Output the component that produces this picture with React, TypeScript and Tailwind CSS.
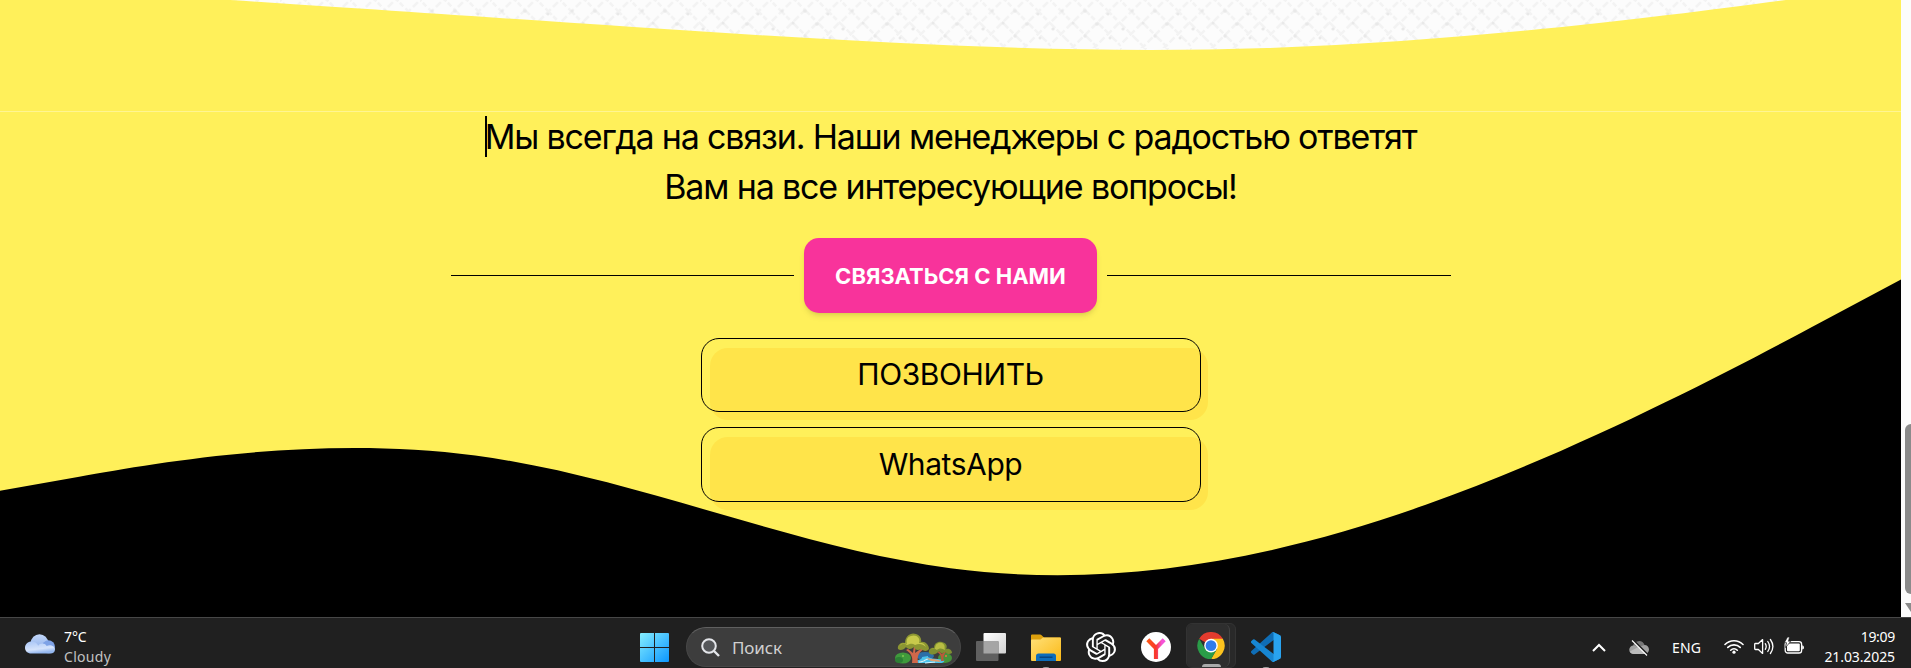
import React from "react";
import { SiOpenai } from "react-icons/si";

function TopWave() {
  return (
    <svg className="block h-[423px] w-full shrink-0" viewBox="0 0 1440 320" preserveAspectRatio="none">
      <path fill="#fff05a" transform="translate(0 0.4)" d="M0,224L80,229.33C160,234.67,320,245.33,480,256C640,266.67,800,277.33,960,272C1120,266.67,1280,245.33,1360,234.67L1440,224L1440,320L0,320Z" />
    </svg>
  );
}

function BottomWave() {
  return (
    <svg className="block h-[422.5px] w-full" viewBox="0 0 1440 320" preserveAspectRatio="none">
      <path fill="#000" d="M0,224L60,213.33C120,202.67,240,181.33,360,197.33C480,213.33,600,266.67,720,282.67C840,298.67,960,277.33,1080,234.67C1200,192,1320,128,1380,96L1440,64L1440,321L0,321Z" />
    </svg>
  );
}

function Texture() {
  return (
    <svg className="absolute inset-0 h-[60px] w-full">
      <defs>
        <pattern id="weave" width="70" height="48" patternUnits="userSpaceOnUse">
          <g fill="none" stroke="#f3f3f3" strokeWidth="2.600">
            <path d="M-5 -5L50 50M20 -5L75 50M-28 -5L27 50M42 -5L97 50" strokeDasharray="9 2 5 3" />
            <path d="M75 -5L20 50M50 -5L-5 50M28 -5L-27 50M97 -5L42 50" strokeDasharray="7 3" />
          </g>
          <g fill="#e9e9e9">
            <circle cx="12" cy="11" r="1.600" />
            <circle cx="35" cy="11" r="1.800" />
            <circle cx="58" cy="14" r="1.500" />
            <circle cx="23" cy="23" r="1.500" />
            <circle cx="47" cy="24" r="1.800" />
            <circle cx="3" cy="29" r="1.600" />
            <circle cx="35" cy="36" r="1.700" />
            <circle cx="60" cy="38" r="1.500" />
          </g>
        </pattern>
      </defs>
      <rect width="100%" height="60" fill="url(#weave)" />
    </svg>
  );
}

function ContactButton({ label, height }: { label: string; height: string }) {
  return (
    <div className={`relative flex w-[500px] ${height}`}>
      <div className="absolute -bottom-2 -right-[7px] left-[9px] top-[10px] rounded-[18px] bg-[#ffe44a]" />
      <button className="relative flex-1 rounded-[18px] border border-black pb-0.5 text-[30px] leading-none tracking-[-0.42px] text-black">
        {label}
      </button>
    </div>
  );
}

function Cloud() {
  return (
    <svg className="h-5 w-[30px]" viewBox="0 0 30 20">
      <defs>
        <linearGradient id="cloudBack" x1="0" y1="0" x2="0" y2="1"><stop stopColor="#c3d8fa" /><stop offset="1" stopColor="#86a9e8" /></linearGradient>
        <linearGradient id="cloudFront" x1="0" y1="0" x2="0.3" y2="1"><stop stopColor="#a9c6f7" /><stop offset=".7" stopColor="#d5e3fb" /><stop offset="1" stopColor="#94b7ef" /></linearGradient>
      </defs>
      <circle cx="14.500" cy="9" r="8.700" fill="url(#cloudBack)" />
      <circle cx="23.500" cy="12.800" r="6.500" fill="#7ea2e6" />
      <path d="M6.500 7.500c3.500 0 5.800 1.800 6.600 4.200 2-3 7-3 8.600.3 3-1.800 8.300-.2 8.300 3.400 0 2.700-2 4.100-4.500 4.100H6.200C2.700 19.500 0 17 0 13.700c0-3.500 3-6.200 6.500-6.200z" fill="url(#cloudFront)" />
    </svg>
  );
}

function WindowsLogo() {
  return (
    <svg className="h-[29px] w-[29px]" viewBox="0 0 29 29">
      <defs><linearGradient id="win" x1="0" y1="0" x2="1" y2="1"><stop stopColor="#85eeff" /><stop offset="1" stopColor="#0c96ff" /></linearGradient></defs>
      <path fill="url(#win)" d="M1 0h13v14H0V1a1 1 0 0 1 1-1zM15 0h13a1 1 0 0 1 1 1v13H15zM0 15h14v14H1a1 1 0 0 1-1-1zM15 15h14v13a1 1 0 0 1-1 1H15z" />
    </svg>
  );
}

function Trees() {
  return (
    <svg className="h-[31px] w-[57px]" viewBox="0 0 57 31">
      <ellipse cx="30" cy="23" rx="9" ry="4" fill="#2d6fa8" />
      <ellipse cx="8" cy="25" rx="8" ry="5.500" fill="#3f9a3c" />
      <ellipse cx="4" cy="27" rx="4" ry="3" fill="#2c7f34" />
      <ellipse cx="50" cy="25" rx="7" ry="5" fill="#46953a" />
      <path d="M20 30c-1-3 8-3 7-6l6-1c-1 3 8 2 16 4 1 2-1 3-3 3z" fill="#4cc3ec" />
      <path d="M24 29c5 0 5-2 9-3M30 30l10-1" stroke="#d4f5ff" strokeWidth="1.200" />
      <path d="M31 25l13 2 2 2-10-1z" fill="#e0a070" />
      <path d="M17 30c1-6-1-10-6-13l2-1 5 4 1-8h2l-1 8 7-5 2 1c-6 4-7 8-6 14z" fill="#d0684a" />
      <path d="M46 28c1-5-1-7-4-9l2-1 3 3 4-4 1 1c-4 4-4 7-3 10z" fill="#b85a3b" />
      <path d="M3 16c-1-4 3-7 7-6 0-7 6-11 11-9 4 1 6 5 5 8 4-1 8 3 8 7-2 3-6 2-8 0-3 2-6 1-7-2-3 3-7 2-8 0-2 3-6 4-8 2z" fill="#8c9632" />
      <path d="M5 13c1-3 4-3 7-1 4-1 4-2 8 0 4-2 8-1 11 2-2-5-5-4-7-4 2-5-3-9-8-7-4 1-5 4-4 8-4-1-6 0-7 2z" fill="#c7c94b" />
      <path d="M34 20c-1-3 2-6 5-5 0-5 4-7 8-6s6 4 4 7c4-1 6 2 6 4-3 2-5 1-7-1-2 2-5 1-6-1-2 3-7 5-10 2z" fill="#7f8f31" />
      <path d="M36 17c2-2 4-1 6 0 2-2 5-2 8 0-1-2 1-5-3-7-4-1-7 1-7 6-2-1-3 0-4 1z" fill="#b8bd43" />
      <circle cx="51" cy="23" r="1" fill="#ef7045" />
      <circle cx="8" cy="23" r="1" fill="#84c652" />
    </svg>
  );
}

function TaskView() {
  return (
    <svg className="h-7 w-[30px]" viewBox="0 0 30 28">
      <defs><linearGradient id="tv" x1="0" y1="0" x2="1" y2="1"><stop stopColor="#fff" /><stop offset="1" stopColor="#d2d2d2" /></linearGradient></defs>
      <rect x="7.500" width="22.500" height="20.500" rx="1" fill="url(#tv)" />
      <rect y="8" width="22.500" height="20" rx="1" fill="#606060" />
      <path d="M7.500 8h14a1 1 0 0 1 1 1v11.500h-15z" fill="#a5a5a5" />
    </svg>
  );
}

function Folder() {
  return (
    <svg className="h-[27px] w-[30px]" viewBox="0 0 30 27">
      <defs><linearGradient id="fold" x1="0" y1="0" x2="1" y2="1"><stop stopColor="#ffe078" /><stop offset="1" stopColor="#fbb916" /></linearGradient></defs>
      <path d="M0 8V1.500Q0 .5 1 .5h8q1 0 1.600.8L13 3.500h16q1 0 1 1V10H0z" fill="#dda00d" />
      <path d="M0 6.500Q0 5.500 1 5.500h8.500L12 3.500h17q1 0 1 1V26q0 1-1 1H1q-1 0-1-1z" fill="url(#fold)" />
      <path d="M5 27v-5q0-2.500 2.500-2.500h15q2.500 0 2.500 2.500v5z" fill="#0d6dbb" />
      <path d="M8.500 23.200h13" stroke="#063c75" strokeWidth="1.200" />
    </svg>
  );
}

function Yandex() {
  return (
    <svg className="h-[30px] w-[30px]" viewBox="0 0 30 30">
      <defs><linearGradient id="ya" x1="0" y1="0" x2="1" y2="0"><stop stopColor="#ff5a10" /><stop offset=".5" stopColor="#f8372e" /><stop offset=".8" stopColor="#f553d8" /></linearGradient></defs>
      <circle cx="15" cy="15" r="15" fill="#fff" />
      <path d="M5.300 9.200l3-3 6.700 6.900 6.700-6.900 3 3-7.600 7.900V27h-4.200v-9.900z" fill="url(#ya)" />
    </svg>
  );
}

function Chrome() {
  return (
    <svg className="h-[30px] w-[30px]" viewBox="0 0 48 48">
      <path d="M24 24L3.200 12A24 24 0 0 1 44.800 12z" fill="#e33b2e" />
      <path d="M24 12h20.800A24 24 0 0 1 24 48L34.400 30z" fill="#fcc31e" />
      <path d="M13.600 30L3.200 12A24 24 0 0 0 24 48l10.400-18z" fill="#2a9c48" />
      <circle cx="24" cy="24" r="12" fill="#fff" />
      <circle cx="24" cy="24" r="9.500" fill="#2f7bea" />
    </svg>
  );
}

function VsCode() {
  return (
    <svg className="h-[30px] w-[30px]" viewBox="0 0 100 100">
      <path d="M96.500 10.800L75.900.9a6.200 6.200 0 0 0-7.100 1.200L1.300 63.600a4.200 4.200 0 0 0 0 6.200l5.500 5a4.200 4.200 0 0 0 5.300.2L93.400 13.400a4.100 4.100 0 0 1 6.600 3.300v-.3a6.300 6.300 0 0 0-3.500-5.600z" fill="#0f6db5" />
      <path d="M96.500 89.200l-20.600 9.900a6.200 6.200 0 0 1-7.100-1.200L1.300 36.400a4.200 4.200 0 0 1 0-6.200l5.500-5a4.200 4.200 0 0 1 5.300-.2l81.300 61.600a4.100 4.100 0 0 0 6.600-3.300v.3a6.300 6.300 0 0 1-3.500 5.600z" fill="#1786d2" />
      <path d="M75.900 99.100a6.200 6.200 0 0 1-7.100-1.200c2.300 2.300 6.200.7 6.200-2.600V4.700c0-3.300-3.900-4.900-6.200-2.600A6.200 6.200 0 0 1 75.900.9l20.600 9.900a6.200 6.200 0 0 1 3.500 5.600v67.200a6.200 6.200 0 0 1-3.500 5.600z" fill="#29a3ef" />
    </svg>
  );
}

function TrayCloud() {
  return (
    <svg className="h-4 w-5" viewBox="0 0 20 16">
      <path d="M4 6a6 6 0 0 1 11.500-1L16 8H4z" fill="#777" />
      <path d="M4.500 5.500c2 0 3 .5 4.500 1.700L15.500 5c2.500 0 4.500 2 4.500 4.500S18 14 15.500 14h-11a4.250 4.250 0 0 1 0-8.500z" fill="#a0a0a0" />
      <path d="M9 7.200l8 6.500c-1 .3-1.500.3-3 .3h-9c-2 0-3.500-1-4.200-2.500z" fill="#bbb" />
      <path d="M4 0l15 15" stroke="#202020" strokeWidth="2" />
      <path d="M3 .5l15 15" stroke="#fff" strokeWidth="1.100" />
    </svg>
  );
}

function Wifi() {
  return (
    <svg className="h-[15px] w-5" viewBox="0 0 20 15" fill="none" stroke="#fff" strokeWidth="1.600" strokeLinecap="round">
      <path d="M1 5.500a12.700 12.700 0 0 1 18 0M3.800 8.400a8.800 8.800 0 0 1 12.400 0M6.700 11.200a4.700 4.700 0 0 1 6.600 0" />
      <circle cx="10" cy="13.200" r="1.600" fill="#fff" stroke="none" />
    </svg>
  );
}

function Volume() {
  return (
    <svg className="h-[17px] w-5" viewBox="0 0 20 17" fill="none" stroke="#fff" strokeWidth="1.300" strokeLinejoin="round" strokeLinecap="round">
      <path d="M.7 6.200q0-.7.700-.7h3L8.600 1.600v13.800L4.400 11.500h-3q-.7 0-.7-.7z" />
      <path d="M11.300 5.700q1.800 2.800 0 5.600M13.800 3.500q3.500 5 0 10M16.400 1.500q5 7 0 14" />
    </svg>
  );
}

function Battery() {
  return (
    <svg className="h-[17px] w-5" viewBox="0 0 20 17">
      <rect x="1.200" y="4.600" width="16.400" height="11.400" rx="2.600" fill="none" stroke="#fff" strokeWidth="1.300" />
      <rect x="3" y="6.400" width="12.800" height="7.800" rx="1" fill="#fff" />
      <path d="M18.200 8.200q1.800.5 1.800 2.200t-1.800 2.200z" fill="#fff" />
      <path d="M3.500 0L.3 5.700h2.200L1.500 10.500 6.800 4.300H4.500L5.500 0z" fill="#fff" stroke="#202020" strokeWidth=".7" />
    </svg>
  );
}

function Taskbar() {
  return (
    <footer className="grid h-[51px] shrink-0 grid-cols-[640px_1fr_320px] border-t border-[#474747] bg-[#202020] font-['Noto_Sans',sans-serif] text-white">
      <div className="flex items-start gap-[9px] pl-[25px]">
        <div className="mt-4"><Cloud /></div>
        <div className="pt-[9px] text-[14px] leading-5">
          <div className="tracking-[-0.1px]">7°C</div>
          <div className="tracking-[0.3px] text-[#c3c3c3]">Cloudy</div>
        </div>
      </div>
      <div className="flex items-start">
        <div className="mt-[15px]"><WindowsLogo /></div>
        <div className="ml-[17px] mt-[9px] flex h-10 w-[275px] items-center rounded-full border border-[#474747] border-t-[#606060] bg-[#3d3d3d] pl-[14px]">
          <svg className="h-[19px] w-[19px]" viewBox="0 0 19 19" fill="none" stroke="#e4e6ea"><circle cx="8" cy="8" r="6.800" strokeWidth="2" fill="#55575a" /><path d="M13 13l5 5" strokeWidth="2.400" /></svg>
          <span className="ml-3 text-[17px] leading-none tracking-[-0.1px] text-[#d0d0d0]">Поиск</span>
          <div className="ml-auto mr-2 mt-[3px]"><Trees /></div>
        </div>
        <div className="ml-[15px] mt-[15px]"><TaskView /></div>
        <div className="ml-[25px] mt-4 flex flex-col items-center"><Folder /><i className="mt-[6px] h-[3px] w-2 rounded-t bg-[#9a9a9a]" /></div>
        <div className="ml-[25px] mt-[14px]"><SiOpenai size={30} /></div>
        <div className="ml-[25px] mt-[14px]"><Yandex /></div>
        <div className="ml-[15px] mt-[5px] flex h-[45px] w-[50px] rounded-md border border-[#333] bg-[#292929]">
          <div className="flex w-[43px] flex-col items-center rounded-md border-r border-[#444] bg-[#2e2e2e] pl-[6px] pt-[8px]"><Chrome /><i className="mt-[5px] h-[3px] w-[19px] rounded-t bg-[#aaa]" /></div>
        </div>
        <div className="ml-[15px] mt-[14px] flex flex-col items-center"><VsCode /><i className="mt-[5px] h-[3px] w-2 rounded-t bg-[#9a9a9a]" /></div>
      </div>
      <div className="flex items-start">
        <svg className="ml-px mt-[25px] h-[9px] w-[14px]" viewBox="0 0 14 9" fill="none" stroke="#fff" strokeWidth="2"><path d="M1 8l6-6 6 6" /></svg>
        <div className="ml-[23px] mt-[22px]"><TrayCloud /></div>
        <span className="ml-[23px] mt-[20px] w-[29px] text-[14px] leading-5 tracking-[0.2px]">ENG</span>
        <div className="ml-[23px] mt-[21px]"><Wifi /></div>
        <div className="ml-[10px] mt-[20px]"><Volume /></div>
        <div className="ml-[10px] mt-[19px]"><Battery /></div>
        <div className="ml-auto mr-4 pt-[9px] text-right text-[14px] leading-5">
          <div className="tracking-[-0.3px]">19:09</div>
          <div className="tracking-[-0.1px]">21.03.2025</div>
        </div>
      </div>
    </footer>
  );
}

export default function App() {
  return (
    <div className="flex h-[668px] w-[1911px] flex-col overflow-hidden bg-black font-['Inter',sans-serif]">
      <div className="flex h-[617px]">
        <main className="relative flex h-[617px] w-[1901px] flex-col overflow-hidden bg-[#fcfcfc]">
          <Texture />
          <div className="relative flex h-[111px] shrink-0 flex-col justify-end"><TopWave /></div>
          <section className="relative flex h-[506px] flex-col items-center border-t border-[#fff592] bg-[#fff05a]">
            <div className="absolute inset-x-0 bottom-0"><BottomWave /></div>
            <h2 className="relative text-center text-[34px] leading-[50px] tracking-[-1.15px] text-black">
              <i className="absolute left-0 top-1 h-[41px] w-0.5 bg-black" />
              Мы всегда на связи. Наши менеджеры с радостью ответят<br />Вам на все интересующие вопросы!
            </h2>
            <div className="relative mt-[26px] flex w-[1000px] items-center gap-[10px]">
              <div className="h-px flex-1 bg-black" />
              <button className="h-[75px] w-[293px] rounded-[15px] bg-[#f8339b] pt-0.5 text-[22px] font-bold text-white shadow-md">СВЯЗАТЬСЯ С НАМИ</button>
              <div className="h-px flex-1 bg-black" />
            </div>
            <div className="relative mt-[25px] flex flex-col gap-[15px]">
              <ContactButton label="ПОЗВОНИТЬ" height="h-[74px]" />
              <ContactButton label="WhatsApp" height="h-[75px]" />
            </div>
          </section>
        </main>
        <aside className="flex w-[10px] flex-col overflow-hidden bg-[#fcfcfc] pl-1 pt-[424px]">
          <div className="h-[170px] w-3 shrink-0 rounded-[6px] bg-[#8b8b8b]" />
          <svg className="-ml-1 mt-2 h-[11px] w-[14px] shrink-0" viewBox="0 0 14 11"><path d="M4 1h12L10 10z" fill="#8b8b8b" /></svg>
        </aside>
      </div>
      <Taskbar />
    </div>
  );
}
